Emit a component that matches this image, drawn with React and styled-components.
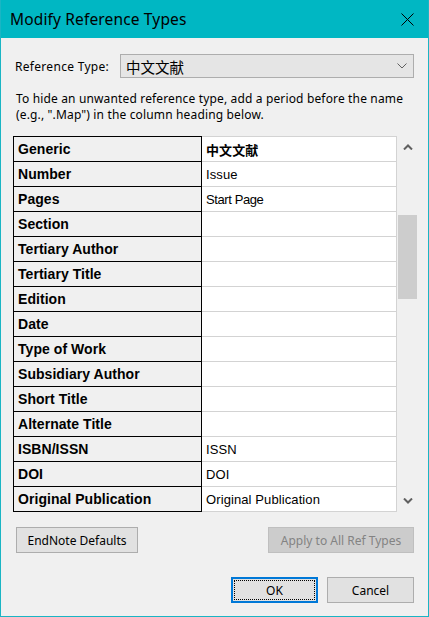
import styled, { createGlobalStyle } from "styled-components";

const GlobalStyle = createGlobalStyle`
  html, body {
    margin: 0;
    padding: 0;
    background: #f0f0f0;
  }
  * {
    box-sizing: border-box;
  }
`;

const UI_FONT = `"Noto Sans", "Noto Sans CJK SC", sans-serif`;
const GRID_FONT = `"Liberation Sans", Arial, "Noto Sans CJK SC", sans-serif`;

const Window = styled.div`
  width: 429px;
  height: 617px;
  display: flex;
  flex-direction: column;
  background: #f0f0f0;
  border: 1px solid #1ab5c4;
  border-top: none;
  font-family: ${UI_FONT};
  color: #000;
  overflow: hidden;
`;

const TitleBar = styled.div`
  height: 38px;
  margin: 0 -1px;
  background: #00b7c3;
  display: flex;
  align-items: center;
  justify-content: space-between;
  padding: 0 15px 0 10px;
  flex-shrink: 0;
`;

const Title = styled.div`
  font-size: 15.5px;
  color: #000;
  letter-spacing: 0.15px;
`;

const Body = styled.div`
  flex: 1;
  display: flex;
  flex-direction: column;
  padding: 16px 0 0 0;
`;

const TypeRow = styled.div`
  display: flex;
  align-items: center;
  padding-left: 14px;
  height: 24px;
`;

const Label = styled.span`
  font-size: 12px;
  width: 105px;
  white-space: nowrap;
  letter-spacing: 0.3px;
`;

const Select = styled.div`
  width: 294px;
  height: 24px;
  background: #e5e5e5;
  border: 1px solid #adadad;
  display: flex;
  align-items: center;
  justify-content: space-between;
  padding: 0 6px 0 5px;
  font-family: "Noto Sans CJK SC", sans-serif;
  font-size: 14.5px;
`;

const Hint = styled.p`
  margin: 13px 0 0 15px;
  font-size: 12px;
  line-height: 16px;
  letter-spacing: 0.15px;
`;

const TableArea = styled.div`
  display: flex;
  margin: 13px 0 0 12px;
`;

const Grid = styled.div`
  width: 384px;
  display: flex;
  flex-direction: column;
`;

const Row = styled.div`
  display: flex;
  height: 25px;

  &:first-child {
    height: 26px;
  }
  &:first-child > div:first-child {
    border-top: 1px solid #000;
  }
  &:first-child > div:last-child {
    border-top: 1px solid #d3d3d3;
  }
`;

const FieldCell = styled.div`
  width: 189px;
  border-left: 1px solid #000;
  border-right: 1px solid #000;
  border-bottom: 1px solid #000;
  background: #f0f0f0;
  display: flex;
  align-items: center;
  padding-left: 4px;
  font-family: ${GRID_FONT};
  font-weight: bold;
  font-size: 14px;
  letter-spacing: 0.05px;
`;

const ValueCell = styled.div`
  width: 195px;
  border-right: 1px solid #d3d3d3;
  border-bottom: 1px solid #d3d3d3;
  background: #fff;
  display: flex;
  align-items: center;
  padding-left: 4px;
  font-family: ${GRID_FONT};
  font-weight: ${(p) => (p.$bold ? "bold" : "normal")};
  font-size: 13px;
  letter-spacing: ${(p) => (p.$tight ? "-0.4px" : "0.1px")};
`;

const ScrollBar = styled.div`
  width: 21px;
  display: flex;
  flex-direction: column;
  align-items: center;
`;

const ArrowBox = styled.div`
  height: 22px;
  width: 21px;
  display: flex;
  align-items: center;
  justify-content: center;
`;

const Track = styled.div`
  flex: 1;
  width: 21px;
  padding: 57px 1px 0 1px;
`;

const Thumb = styled.div`
  height: 84px;
  background: #cdcdcd;
`;

const ButtonRow = styled.div`
  display: flex;
  justify-content: ${(p) => p.$justify || "space-between"};
  padding: 0 14px 0 15px;
  margin-top: ${(p) => p.$top}px;
`;

const Button = styled.button`
  height: 26px;
  width: ${(p) => p.$w}px;
  font-family: ${UI_FONT};
  font-size: 12px;
  color: ${(p) => (p.disabled ? "#838383" : "#000")};
  background: ${(p) => (p.disabled ? "#cccccc" : "#e1e1e1")};
  border: 1px solid ${(p) => (p.disabled ? "#bfbfbf" : "#adadad")};
  padding: 0;
  position: relative;
  ${(p) =>
    p.$default &&
    `
    border: 2px solid #0078d7;
    &::after {
      content: "";
      position: absolute;
      inset: 1px;
      border: 1px dotted #000;
    }
  `}
`;

const Actions = styled.div`
  display: flex;
  gap: 9px;
`;

const rows = [
  ["Generic", "中文文献", true],
  ["Number", "Issue"],
  ["Pages", "Start Page", false, true],
  ["Section", ""],
  ["Tertiary Author", ""],
  ["Tertiary Title", ""],
  ["Edition", ""],
  ["Date", ""],
  ["Type of Work", ""],
  ["Subsidiary Author", ""],
  ["Short Title", ""],
  ["Alternate Title", ""],
  ["ISBN/ISSN", "ISSN"],
  ["DOI", "DOI"],
  ["Original Publication", "Original Publication"],
];

export default function App() {
  return (
    <>
      <GlobalStyle />
      <Window>
        <TitleBar>
          <Title>Modify Reference Types</Title>
          <svg width="13" height="13" viewBox="0 0 13 13">
            <path d="M0.5 0.5 L12.5 12.5 M12.5 0.5 L0.5 12.5" stroke="#000" strokeWidth="1" />
          </svg>
        </TitleBar>
        <Body>
          <TypeRow>
            <Label>Reference Type:</Label>
            <Select>
              <span>中文文献</span>
              <svg width="10" height="6" viewBox="0 0 10 6">
                <path d="M0.5 0.5 L5 5 L9.5 0.5" fill="none" stroke="#606060" strokeWidth="1" />
              </svg>
            </Select>
          </TypeRow>
          <Hint>
            To hide an unwanted reference type, add a period before the name
            <br />
            (e.g., ".Map") in the column heading below.
          </Hint>
          <TableArea>
            <Grid>
              {rows.map(([field, value, bold, tight]) => (
                <Row key={field}>
                  <FieldCell>{field}</FieldCell>
                  <ValueCell $bold={bold} $tight={tight}>
                    {value}
                  </ValueCell>
                </Row>
              ))}
            </Grid>
            <ScrollBar>
              <ArrowBox>
                <svg width="10" height="6" viewBox="0 0 10 6">
                  <path d="M1 5.5 L5 1.5 L9 5.5" fill="none" stroke="#606060" strokeWidth="2" />
                </svg>
              </ArrowBox>
              <Track>
                <Thumb />
              </Track>
              <ArrowBox>
                <svg width="10" height="6" viewBox="0 0 10 6">
                  <path d="M1 0.5 L5 4.5 L9 0.5" fill="none" stroke="#606060" strokeWidth="2" />
                </svg>
              </ArrowBox>
            </ScrollBar>
          </TableArea>
          <ButtonRow $top={15}>
            <Button $w={122}>EndNote Defaults</Button>
            <Button $w={146} disabled>
              Apply to All Ref Types
            </Button>
          </ButtonRow>
          <ButtonRow $top={24} $justify="flex-end">
            <Actions>
              <Button $w={87} $default>
                OK
              </Button>
              <Button $w={87}>Cancel</Button>
            </Actions>
          </ButtonRow>
        </Body>
      </Window>
    </>
  );
}
